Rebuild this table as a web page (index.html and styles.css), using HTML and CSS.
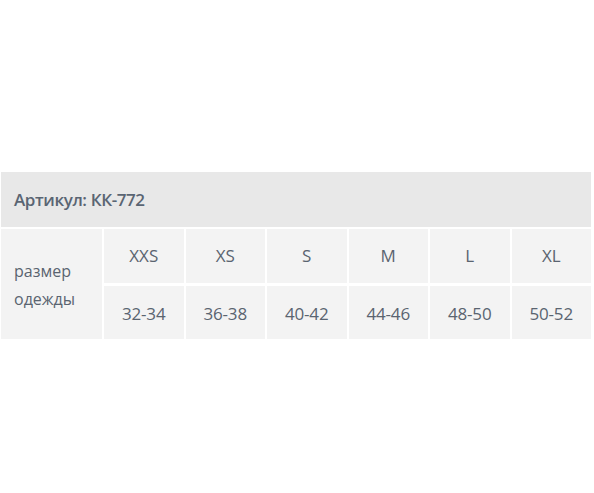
FILE: index.html
```html
<!DOCTYPE html>
<html lang="ru">
<head>
<meta charset="utf-8">
<link rel="stylesheet" href="styles.css">
</head>
<body>
<div class="sheet">
  <div class="title">Артикул: КК-772</div>
  <div class="grid">
    <div class="label">размер<br>одежды</div>
    <div class="cell">XXS</div>
    <div class="cell">XS</div>
    <div class="cell">S</div>
    <div class="cell">M</div>
    <div class="cell">L</div>
    <div class="cell">XL</div>
    <div class="cell num">32-34</div>
    <div class="cell num">36-38</div>
    <div class="cell num">40-42</div>
    <div class="cell num">44-46</div>
    <div class="cell num">48-50</div>
    <div class="cell num">50-52</div>
  </div>
</div>
</body>
</html>
```
FILE: styles.css
```css
html, body {
  margin: 0;
  padding: 0;
  background: #ffffff;
}
body {
  font-family: "Open Sans", "Noto Sans", sans-serif;
  color: #5a6470;
}
.sheet {
  width: 590px;
  margin: 172px 0 0 1px;
}
.title {
  height: 55px;
  background: #e8e8e8;
  display: flex;
  align-items: center;
  padding-left: 13px;
  font-size: 17px;
  font-weight: 600;
  letter-spacing: -0.4px;
  color: #5a6573;
}
.grid {
  margin-top: 2px;
  display: grid;
  grid-template-columns: 101px repeat(6, 1fr);
  grid-template-rows: 54px 53px;
  gap: 3px 2px;
}
.label {
  grid-row: 1 / span 2;
  background: #f3f3f3;
  display: flex;
  align-items: center;
  padding-left: 13px;
  font-size: 16px;
  line-height: 28px;
  padding-top: 2px;
}
.cell {
  background: #f3f3f3;
  display: flex;
  align-items: center;
  justify-content: center;
  font-size: 17px;
  padding-bottom: 1px;
}
.cell.num {
  padding-bottom: 0;
  padding-top: 1px;
  letter-spacing: -0.2px;
}
```
